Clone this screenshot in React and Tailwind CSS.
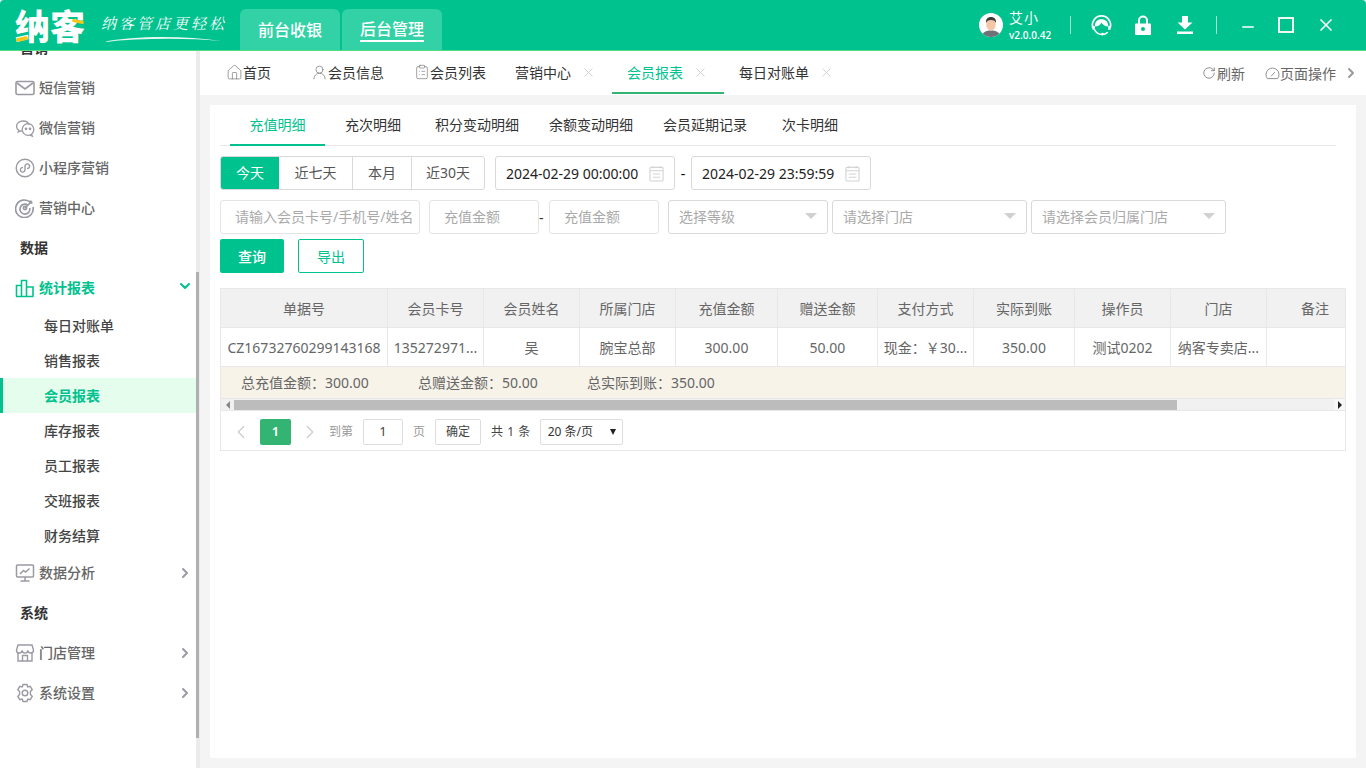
import React from "react";
import { ChevronDown, ChevronRight, ChevronLeft, X, Minus, RotateCw, Home, UserRound, ClipboardList } from "lucide-react";

const sideIcon = "w-[20px] h-[20px] shrink-0";

const MailIcon = () => (
  <svg viewBox="0 0 20 20" className={sideIcon} fill="none" stroke="#9a9aa2" strokeWidth="1.6">
    <rect x="1" y="3.5" width="18" height="13" rx="1.5" />
    <path d="M2 5l8 6 8-6" />
  </svg>
);
const WechatIcon = () => (
  <svg viewBox="0 0 20 20" className={sideIcon} fill="none" stroke="#9a9aa2" strokeWidth="1.3">
    <path d="M8 3C4.4 3 1.5 5.300 1.500 8.200c0 1.600.9 3 2.300 4l-.5 1.800 2.100-1.100c.6.200 1 .2 1.600.3" />
    <path d="M8 3c2.900 0 5.400 1.600 6.200 3.800" />
    <circle cx="13" cy="11.500" r="5.800" />
    <circle cx="11" cy="10.800" r=".7" fill="#9a9aa2" />
    <circle cx="15" cy="10.800" r=".7" fill="#9a9aa2" />
    <path d="M16.500 16l.8 2.200-2.500-1.200" />
  </svg>
);
const MiniIcon = () => (
  <svg viewBox="0 0 20 20" className={sideIcon} fill="none" stroke="#9a9aa2" strokeWidth="1.4">
    <circle cx="10" cy="10" r="8.800" />
    <path d="M10 11.500V8.200a2.300 2.300 0 1 1 2 2.300M10 8.500v3.300a2.300 2.300 0 1 1-2-2.300" />
  </svg>
);
const TargetIcon = () => (
  <svg viewBox="0 0 20 20" className={sideIcon} fill="none" stroke="#9a9aa2" strokeWidth="1.7">
    <path d="M15.500 4.500A8.800 8.800 0 1 0 18 9" />
    <path d="M12.800 7A5 5 0 1 0 14.800 10" />
    <circle cx="10" cy="10" r="1.600" />
    <path d="M10 10l7-7M15 2.500V5h2.500" />
  </svg>
);
const BarsIcon = () => (
  <svg viewBox="0 0 20 20" className={sideIcon} fill="none" stroke="#00c28e" strokeWidth="1.6">
    <path d="M1.500 18.500v-11h5v11M6.500 18.500V2.500h5v16M11.500 18.500V9h6.500v9.500M1 18.500h17.500" />
  </svg>
);
const MonitorIcon = () => (
  <svg viewBox="0 0 20 20" className={sideIcon} fill="none" stroke="#9a9aa2" strokeWidth="1.5">
    <rect x="1.500" y="2" width="17" height="12" rx="1" />
    <path d="M5 11l3.500-3.500 2 1.500L14.500 5.500M10 14v3.500M5.500 18h9" />
  </svg>
);
const ShopIcon = () => (
  <svg viewBox="0 0 20 20" className={sideIcon} fill="none" stroke="#9a9aa2" strokeWidth="1.4">
    <path d="M3 2h14l1.500 5a2.800 2.800 0 0 1-5.700.300 2.800 2.800 0 0 1-5.600 0A2.800 2.800 0 0 1 1.500 7z" />
    <path d="M3 9.500V18h14V9.500M7.500 18v-5.500h5V18" />
  </svg>
);
const GearIcon = () => (
  <svg viewBox="0 0 20 20" className={sideIcon} fill="none" stroke="#9a9aa2" strokeWidth="1.4">
    <path d="M8 1.500h4l.7 2.500 2.500-.7 2 3.400-1.800 1.800v3l1.800 1.800-2 3.400-2.500-.7-.7 2.500H8l-.7-2.500-2.500.7-2-3.400L4.600 11.500v-3L2.800 6.700l2-3.400 2.500.7z" />
    <circle cx="10" cy="10" r="2.800" />
  </svg>
);

const CalendarIcon = () => (
  <svg viewBox="0 0 16 18" className="w-[15px] h-[17px] shrink-0" fill="none" stroke="#d4d4d4" strokeWidth="1.200">
    <rect x="1" y="2.500" width="14" height="14.500" rx="1" />
    <path d="M1 6h14M4 1v2.500M12 1v2.500M4 9.500h8M4 13h8" />
  </svg>
);

const Caret = () => (
  <div className="w-0 h-0 border-x-[6px] border-x-transparent border-t-[6px] border-t-[#d0d0d0]" />
);

const Logo = () => (
  <div className="w-[240px] pl-[15px] flex items-center shrink-0">
    <div className="relative text-[35px] leading-[40px] font-black text-white font-['Noto_Sans_CJK_SC',sans-serif]">
      纳客
      <div className="absolute left-[1px] bottom-[4px] w-[12px] h-[4px] rounded-full bg-[#f5c518] -rotate-12" />
      <div className="absolute right-[1px] top-[15px] w-[12px] h-[3px] rounded-full bg-[#f5c518] rotate-12" />
    </div>
    <div className="relative ml-[16px] mb-[5px] text-white text-[15px] leading-[20px] italic tracking-[3px] whitespace-nowrap font-['Noto_Serif_CJK_SC','Noto_Sans_CJK_SC',sans-serif]">
      纳客管店更轻松
      <svg viewBox="0 0 120 6" className="absolute left-[2px] top-[23px] w-[118px] h-[6px]" fill="#e8f8f2">
        <path d="M0 6C30 0 80-1 120 5 85 2 40 2 0 6z" />
      </svg>
    </div>
  </div>
);

const TopTab = ({ label, underline }) => (
  <div className="w-[100px] h-[41px] mr-[2px] rounded-t-[6px] bg-[#33d2a6] flex justify-center items-center text-white text-[16px] font-medium">
    <span className={underline ? "border-b-2 border-white leading-[22px]" : "leading-[22px]"}>{label}</span>
  </div>
);

const Header = () => (
  <div className="h-[51px] shrink-0 bg-[#00c28e] border-b border-[#52dc87] rounded-t-[4px] flex items-end">
    <div className="h-full flex items-center"><Logo /></div>
    <TopTab label="前台收银" />
    <TopTab label="后台管理" underline />
    <div className="flex-1" />
    <div className="h-full flex items-center text-white">
      <svg viewBox="0 0 24 24" className="w-[24px] h-[24px]">
        <clipPath id="av"><circle cx="12" cy="12" r="12" /></clipPath>
        <g clipPath="url(#av)">
          <rect width="24" height="24" fill="#fff" />
          <path d="M3 24c0-5 4-6.500 9-6.500s9 1.500 9 6.500z" fill="#6f7378" />
          <ellipse cx="12" cy="11.500" rx="4.700" ry="6" fill="#f5c6a5" />
          <path d="M7 10c-.5-4 2-6 5-6s5.500 2 5 6c-1-2-2-3-5-3s-4 1-5 3z" fill="#3b3b3b" />
        </g>
      </svg>
      <div className="ml-[6px] w-[61px] flex flex-col">
        <span className="text-[14px] leading-[17px] tracking-[1px]">艾小</span>
        <span className="text-[10px] leading-[14px] font-semibold font-['Open_Sans',sans-serif] mt-[2px]">v2.0.0.42</span>
      </div>
      <div className="w-px h-[18px] bg-[#a6e6d3]" />
      <svg viewBox="0 0 22 22" className="ml-[20px] w-[21px] h-[21px]" fill="none" stroke="#fff">
        <path d="M2 13.500A9.500 9.500 0 1 1 20 13.500" strokeWidth="1.800" />
        <path d="M4 12c0-5 3-7.500 7-7.500s7 2.500 7 7.500c-3 0-5.500-1.500-7-4-1.500 2.500-3.500 4-7 4z" fill="#fff" strokeWidth="0" />
        <path d="M1.500 11.500h2.500v4H1.500zM18 11.500h2.500v4H18z" fill="#fff" strokeWidth="0" />
        <path d="M3.500 15c1.500 3.500 4.500 5.500 8 5.500 2.500 0 4.500-1 6-2.500" strokeWidth="1.600" />
        <circle cx="12" cy="20" r="1.500" fill="#fff" strokeWidth="0" />
      </svg>
      <svg viewBox="0 0 16 20" className="ml-[23px] w-[16px] h-[20px]" fill="#fff">
        <path d="M3 9V5.500a5 5 0 0 1 10 0V9h-2V5.500a3 3 0 0 0-6 0V9z" />
        <path fillRule="evenodd" d="M1 8.500h14a1 1 0 0 1 1 1V19a1 1 0 0 1-1 1H1a1 1 0 0 1-1-1V9.500a1 1 0 0 1 1-1zM8 12a2 2 0 1 0 0 4 2 2 0 0 0 0-4z" />
      </svg>
      <svg viewBox="0 0 16 18" className="ml-[26px] w-[16px] h-[18px]" fill="#fff">
        <path d="M5 0h6v6.500h4.500L8 13.500.5 6.500H5z" />
        <rect y="15.500" width="16" height="2.500" />
      </svg>
      <div className="ml-[23px] w-px h-[18px] bg-[#a6e6d3]" />
      <Minus size={18} strokeWidth={2} className="ml-[22px] translate-y-[2px]" />
      <div className="ml-[21px] w-[16px] h-[16px] border-2 border-[#f0faf0]" />
      <X size={20} strokeWidth={2} className="ml-[22px] mr-[30px]" />
    </div>
  </div>
);

const SideRow = ({ icon, label, arrow }) => (
  <div className="h-[40px] flex items-center pl-[15px] pr-[3px] text-[14px] font-medium text-[#666]">
    {icon}
    <span className="ml-[4px] flex-1 pb-[2px]">{label}</span>
    {arrow === "right" && <ChevronRight size={16} strokeWidth={3} className="text-[#9a9aa2]" />}
  </div>
);

const SideGroup = ({ label }) => (
  <div className="h-[40px] pb-[2px] flex items-center pl-[20px] text-[14px] font-semibold text-[#333]">{label}</div>
);

const subItems = ["每日对账单", "销售报表", "会员报表", "库存报表", "员工报表", "交班报表", "财务结算"];

const Sidebar = () => (
  <div className="w-[200px] shrink-0 flex overflow-hidden bg-white">
    <div className="w-[196px] shrink-0 -mt-[23px]">
      <SideGroup label="营销" />
      <SideRow icon={<MailIcon />} label="短信营销" />
      <SideRow icon={<WechatIcon />} label="微信营销" />
      <SideRow icon={<MiniIcon />} label="小程序营销" />
      <SideRow icon={<TargetIcon />} label="营销中心" />
      <SideGroup label="数据" />
      <div className="h-[40px] flex items-center pl-[15px] pr-[3px] text-[14px] font-semibold text-[#00c28e]">
        <BarsIcon />
        <span className="ml-[4px] flex-1 pb-[2px]">统计报表</span>
        <ChevronDown size={16} strokeWidth={3} className="-translate-y-[2px]" />
      </div>
      {subItems.map((item) =>
        item === "会员报表" ? (
          <div key={item} className="h-[35px] flex items-center pl-[41px] border-l-[3px] border-[#00c28e] bg-[#e4fdec] text-[14px] font-semibold text-[#00c28e]">
            {item}
          </div>
        ) : (
          <div key={item} className="h-[35px] flex items-center pl-[44px] text-[14px] font-medium text-[#444]">
            {item}
          </div>
        )
      )}
      <SideRow icon={<MonitorIcon />} label="数据分析" arrow="right" />
      <SideGroup label="系统" />
      <SideRow icon={<ShopIcon />} label="门店管理" arrow="right" />
      <SideRow icon={<GearIcon />} label="系统设置" arrow="right" />
    </div>
    <div className="w-[4px] shrink-0 bg-[#ebebeb]">
      <div className="w-[3px] h-[466px] mt-[221px] bg-[#b0b0b0]" />
    </div>
  </div>
);

const TabClose = () => <X size={15} strokeWidth={1.2} className="ml-[10px] text-[#c8c8c8]" />;

const TabBar = () => (
  <div className="h-[44px] shrink-0 bg-white flex items-stretch text-[14px] text-[#333]">
    <div className="w-[111px] pl-[26px] pb-[2px] flex items-center">
      <Home size={17} strokeWidth={1} className="text-[#777]" />
      首页
    </div>
    <div className="w-[103px] pb-[2px] flex items-center">
      <UserRound size={17} strokeWidth={1} className="text-[#777]" />
      会员信息
    </div>
    <div className="w-[101px] pb-[2px] flex items-center">
      <ClipboardList size={16} strokeWidth={1} className="text-[#777]" />
      会员列表
    </div>
    <div className="w-[97px] pb-[2px] flex items-center">
      营销中心
      <TabClose />
    </div>
    <div className="w-[112px] mb-[1px] pl-[15px] pt-[2px] flex items-center text-[#00c28e] border-b-2 border-[#34b472]">
      会员报表
      <TabClose />
    </div>
    <div className="ml-[15px] pb-[2px] flex items-center">
      每日对账单
      <TabClose />
    </div>
    <div className="flex-1" />
    <div className="flex items-center text-[#666]">
      <RotateCw size={14} strokeWidth={1.2} className="mr-[1px]" />
      刷新
      <svg viewBox="0 0 16 14" className="ml-[20px] w-[15px] h-[13px]" fill="none" stroke="#888" strokeWidth="1">
        <path d="M2.500 12.500A7 7 0 1 1 13.500 12.500z" />
        <path d="M6.500 10L10.500 5.500" />
      </svg>
      页面操作
      <ChevronRight size={16} strokeWidth={3} className="ml-[7px] mr-[7px] text-[#999]" />
    </div>
  </div>
);

const subTabs = ["充次明细", "积分变动明细", "余额变动明细", "会员延期记录", "次卡明细"];
const subTabWidths = ["w-[96px]", "w-[112px]", "w-[116px]", "w-[112px]", "w-[98px]"];

const SubTabs = () => (
  <div className="h-[41px] border-b border-[#e8e8e8] mr-[20px] flex text-[14px] text-[#333]">
    <div className="ml-[10px] w-[95px] h-[41px] flex justify-center items-center text-[#00c28e] border-b-2 border-[#00c28e]">充值明细</div>
    {subTabs.map((tab, i) => (
      <div key={tab} className={`${subTabWidths[i]} h-[40px] pb-[2px] flex justify-center items-center`}>{tab}</div>
    ))}
  </div>
);

const DateBox = ({ value }) => (
  <div className="w-[180px] h-[34px] px-[10px] border border-[#d9d9d9] rounded-[3px] flex justify-between items-center text-[14px] text-[#222]">
    {value}
    <CalendarIcon />
  </div>
);

const Select = ({ width, text }) => (
  <div className={`${width} h-[34px] pl-[10px] pr-[10px] pb-[2px] border border-[#d9d9d9] rounded-[3px] flex justify-between items-center text-[#aaa]`}>
    {text}
    <Caret />
  </div>
);

const Filters = () => (
  <div className="text-[14px]">
    <div className="mt-[10px] flex items-center">
      <div className="h-[34px] flex border border-[#d9d9d9] rounded-[3px] text-[#555]">
        <div className="w-[58px] pb-[2px] flex justify-center items-center bg-[#00c28e] text-white rounded-l-[2px]">今天</div>
        <div className="w-[74px] pb-[2px] flex justify-center items-center border-r border-[#d9d9d9]">近七天</div>
        <div className="w-[59px] pb-[2px] flex justify-center items-center border-r border-[#d9d9d9]">本月</div>
        <div className="w-[72px] pb-[2px] flex justify-center items-center">近30天</div>
      </div>
      <div className="ml-[10px]"><DateBox value="2024-02-29 00:00:00" /></div>
      <span className="w-[16px] text-center">-</span>
      <DateBox value="2024-02-29 23:59:59" />
    </div>
    <div className="mt-[10px] flex items-center text-[#aaa]">
      <div className="w-[200px] h-[34px] pl-[14px] pb-[2px] border border-[#e4e4e4] rounded-[3px] flex items-center whitespace-nowrap overflow-hidden">请输入会员卡号/手机号/姓名</div>
      <div className="ml-[9px] w-[110px] h-[34px] pl-[14px] pb-[2px] border border-[#e4e4e4] rounded-[3px] flex items-center">充值金额</div>
      <span className="w-[10px] text-left text-[#333]">-</span>
      <div className="w-[110px] h-[34px] pl-[14px] pb-[2px] border border-[#e4e4e4] rounded-[3px] flex items-center">充值金额</div>
      <div className="ml-[9px]"><Select width="w-[160px]" text="选择等级" /></div>
      <div className="ml-[4px]"><Select width="w-[195px]" text="请选择门店" /></div>
      <div className="ml-[4px]"><Select width="w-[195px]" text="请选择会员归属门店" /></div>
    </div>
    <div className="mt-[5px] flex">
      <div className="w-[64px] h-[34px] rounded-[2px] bg-[#00c28e] text-white flex justify-center items-center font-medium">查询</div>
      <div className="ml-[14px] w-[66px] h-[34px] rounded-[2px] border border-[#00c28e] text-[#00c28e] flex justify-center items-center">导出</div>
    </div>
  </div>
);

const headers = ["单据号", "会员卡号", "会员姓名", "所属门店", "充值金额", "赠送金额", "支付方式", "实际到账", "操作员", "门店", "备注"];
const rowCells = ["CZ16732760299143168", "135272971...", "吴", "腕宝总部", "300.00", "50.00", "现金：￥30...", "350.00", "测试0202", "纳客专卖店...", ""];
const colClass = "grid grid-cols-[167px_96px_96px_96px_102px_100px_96px_101px_96px_96px_1fr]";

const ReportTable = () => (
  <div className="mt-[15px] mr-[10px] border border-[#e8e8e8] text-[14px] text-[#666]">
    <div className={`${colClass} h-[39px] bg-[#f1f1f1] border-b border-[#e8e8e8]`}>
      {headers.map((h, i) => (
        <div key={h} className={`flex justify-center items-center ${i < 10 ? "border-r border-[#e8e8e8]" : "pl-[18px]"}`}>{h}</div>
      ))}
    </div>
    <div className={`${colClass} h-[39px] border-b border-[#e8e8e8]`}>
      {rowCells.map((c, i) => (
        <div key={i} className={`flex justify-center items-center whitespace-nowrap overflow-hidden ${i < 10 ? "border-r border-[#e8e8e8]" : ""}`}>{c}</div>
      ))}
    </div>
    <div className="h-[31px] bg-[#f7f3e9] flex items-center pl-[20px] text-[#666]">
      <span className="w-[177px]">总充值金额：300.00</span>
      <span className="w-[169px]">总赠送金额：50.00</span>
      <span>总实际到账：350.00</span>
    </div>
    <div className="h-[13px] bg-[#f1f1f1] border-y border-[#e8e8e8] flex items-center">
      <div className="w-[13px] flex justify-center">
        <div className="w-0 h-0 border-y-[4px] border-y-transparent border-r-[4px] border-r-[#888]" />
      </div>
      <div className="w-[943px] h-[10px] bg-[#bcbcbc]" />
      <div className="flex-1" />
      <div className="w-[11px] h-full bg-[#f7f7f7] flex justify-center items-center">
        <div className="w-0 h-0 border-y-[4px] border-y-transparent border-l-[4px] border-l-[#222]" />
      </div>
    </div>
    <div className="h-[39px] pt-[2px] flex items-center pl-[9px] text-[12px] text-[#999]">
      <ChevronLeft size={22} strokeWidth={1.3} className="text-[#ccc]" />
      <div className="ml-[8px] w-[31px] h-[26px] rounded-[2px] bg-[#34b472] text-white text-[13px] font-semibold flex justify-center items-center">1</div>
      <ChevronRight size={22} strokeWidth={1.3} className="ml-[8px] text-[#ccc]" />
      <span className="ml-[8px]">到第</span>
      <div className="ml-[10px] w-[40px] h-[26px] border border-[#ddd] rounded-[2px] flex justify-center items-center text-[13px] text-[#444]">1</div>
      <span className="ml-[10px]">页</span>
      <div className="ml-[10px] w-[46px] h-[26px] border border-[#ddd] rounded-[2px] flex justify-center items-center text-[#444]">确定</div>
      <span className="ml-[10px] text-[#444] tracking-[0.5px] whitespace-nowrap">共 1 条</span>
      <div className="ml-[9px] w-[83px] h-[26px] border border-[#ddd] rounded-[2px] pl-[7px] pr-[6px] flex justify-between items-center text-[#333]">
        20 条/页
        <div className="w-0 h-0 border-x-[3.500px] border-x-transparent border-t-[6px] border-t-[#222]" />
      </div>
    </div>
  </div>
);

export default function App() {
  return (
    <div className="w-[1366px] h-[768px] flex flex-col overflow-hidden bg-white font-['Noto_Sans','Noto_Sans_CJK_SC',sans-serif]">
      <Header />
      <div className="flex-1 flex min-h-0">
        <Sidebar />
        <div className="flex-1 flex flex-col min-w-0 bg-[#f4f4f4]">
          <TabBar />
          <div className="flex-1 mt-[10px] mb-[10px] ml-[10px] mr-[10px] bg-white pl-[10px] pr-0">
            <SubTabs />
            <Filters />
            <ReportTable />
          </div>
        </div>
      </div>
    </div>
  );
}
